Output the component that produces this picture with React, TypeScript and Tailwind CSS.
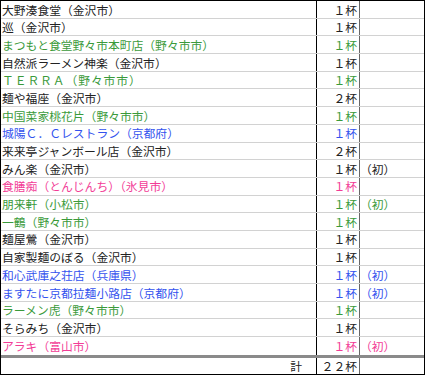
import React from "react";

type Row = { name: string; cups: string; c: "k" | "g" | "b" | "p"; first?: boolean; wide?: boolean };

const rows: Row[] = [
  { name: "大野湊食堂（金沢市）", cups: "１杯", c: "k" },
  { name: "巡（金沢市）", cups: "１杯", c: "k" },
  { name: "まつもと食堂野々市本町店（野々市市）", cups: "１杯", c: "g" },
  { name: "自然派ラーメン神楽（金沢市）", cups: "１杯", c: "k" },
  { name: "ＴＥＲＲＡ（野々市市）", cups: "１杯", c: "g", wide: true },
  { name: "麺や福座（金沢市）", cups: "２杯", c: "k" },
  { name: "中国菜家桃花片（野々市市）", cups: "１杯", c: "g" },
  { name: "城陽Ｃ．Ｃレストラン（京都府）", cups: "１杯", c: "b" },
  { name: "来来亭ジャンボール店（金沢市）", cups: "２杯", c: "k" },
  { name: "みん楽（金沢市）", cups: "１杯", c: "k", first: true },
  { name: "食膳痴（とんじんち）（氷見市）", cups: "１杯", c: "p" },
  { name: "朋来軒（小松市）", cups: "１杯", c: "g", first: true },
  { name: "一鶴（野々市市）", cups: "１杯", c: "g" },
  { name: "麺屋鶯（金沢市）", cups: "１杯", c: "k" },
  { name: "自家製麺のぼる（金沢市）", cups: "１杯", c: "k" },
  { name: "和心武庫之荘店（兵庫県）", cups: "１杯", c: "b", first: true },
  { name: "ますたに京都拉麺小路店（京都府）", cups: "１杯", c: "b", first: true },
  { name: "ラーメン虎（野々市市）", cups: "１杯", c: "g" },
  { name: "そらみち（金沢市）", cups: "１杯", c: "k" },
  { name: "アラキ（富山市）", cups: "１杯", c: "p", first: true },
];

const colorClass: Record<Row["c"], string> = {
  k: "text-[#222222]",
  g: "text-[#3a9a3a]",
  b: "text-[#3352ee]",
  p: "text-[#f23c96]",
};

export default function App() {
  return (
    <div
      className="w-[425px] h-[375px] bg-white border border-black flex flex-col text-[11.8px]"
      style={{ fontFamily: '"Noto Sans CJK JP", "Noto Sans", sans-serif' }}
    >
      {rows.map((r, i) => (
        <div
          key={i}
          className={`flex h-[17.7px] shrink-0 ${i < rows.length - 1 ? "border-b border-[#d2d2d2]" : ""} ${colorClass[r.c]}`}
        >
          <div className={`w-[316px] shrink-0 border-r border-black pl-[1px] flex items-center whitespace-nowrap ${r.wide ? "tracking-[0.9px]" : ""}`}>
            {r.name}
          </div>
          <div className="w-[43px] shrink-0 border-r border-[#666666] pr-[2px] flex items-center justify-end whitespace-nowrap">
            {r.cups}
          </div>
          <div className="flex-1 flex items-center whitespace-nowrap">{r.first ? "（初）" : ""}</div>
        </div>
      ))}
      <div className="h-[3px] shrink-0 bg-[#8a8a8a]" />
      <div className="flex h-[16px] shrink-0 text-[#222222]">
        <div className="w-[316px] shrink-0 border-r border-black pr-[14px] flex items-center justify-end">計</div>
        <div className="w-[43px] shrink-0 border-r border-[#666666] pr-[2px] flex items-center justify-end whitespace-nowrap">
          ２２杯
        </div>
        <div className="flex-1" />
      </div>
    </div>
  );
}
